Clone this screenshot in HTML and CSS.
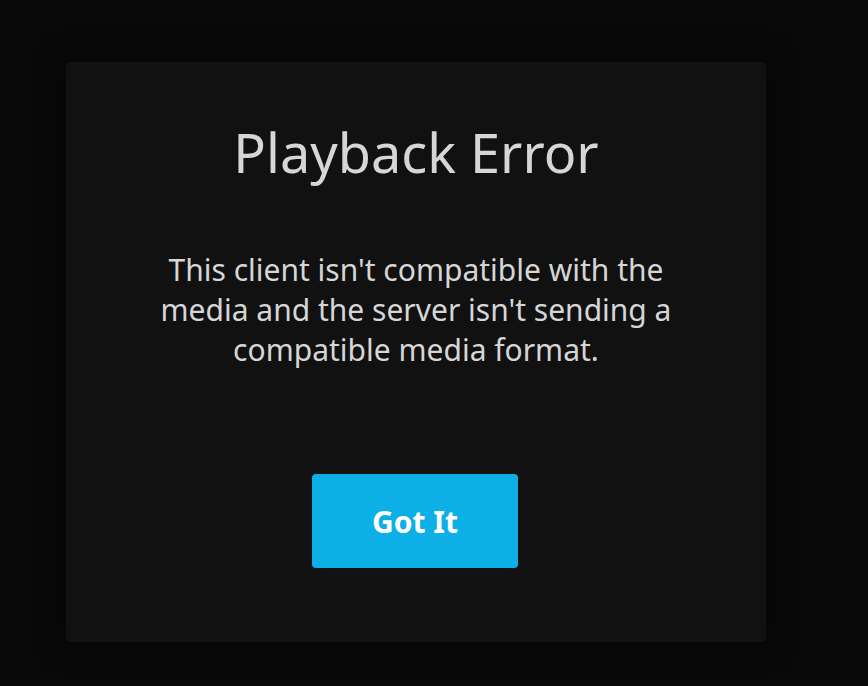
FILE: index.html
```html
<!DOCTYPE html>
<html>
<head>
<meta charset="utf-8">
<link rel="stylesheet" href="styles.css">
</head>
<body>
<div class="page">
  <div class="dialog">
    <h1 class="title">Playback Error</h1>
    <p class="message">This client isn't compatible with the media and the server isn't sending a compatible media format.</p>
    <button class="btn">Got It</button>
  </div>
</div>
</body>
</html>
```
FILE: styles.css
```css
html, body {
  margin: 0;
  padding: 0;
  background: #090909;
  height: 100%;
}
.page {
  padding: 62px 0 0 66px;
}
.dialog {
  width: 700px;
  height: 580px;
  box-sizing: border-box;
  background: #111111;
  border-radius: 4px;
  box-shadow: 0 0 30px rgba(0,0,0,0.6);
  display: flex;
  flex-direction: column;
  align-items: center;
  font-family: "Noto Sans", sans-serif;
  color: #d6d6d6;
  padding-top: 63px;
}
.title {
  margin: 0;
  font-weight: 400;
  font-size: 54px;
  line-height: 54px;
  color: #d6d6d6;
}
.message {
  margin: 71px 0 0;
  width: 530px;
  text-align: center;
  font-size: 30px;
  line-height: 40px;
}
.btn {
  margin: 104px 2px 0 0;
  width: 206px;
  height: 94px;
  border: none;
  border-radius: 4px;
  background: #0cb0e6;
  color: #fff;
  font-family: "Noto Sans", sans-serif;
  font-weight: 700;
  font-size: 30px;
}
```
